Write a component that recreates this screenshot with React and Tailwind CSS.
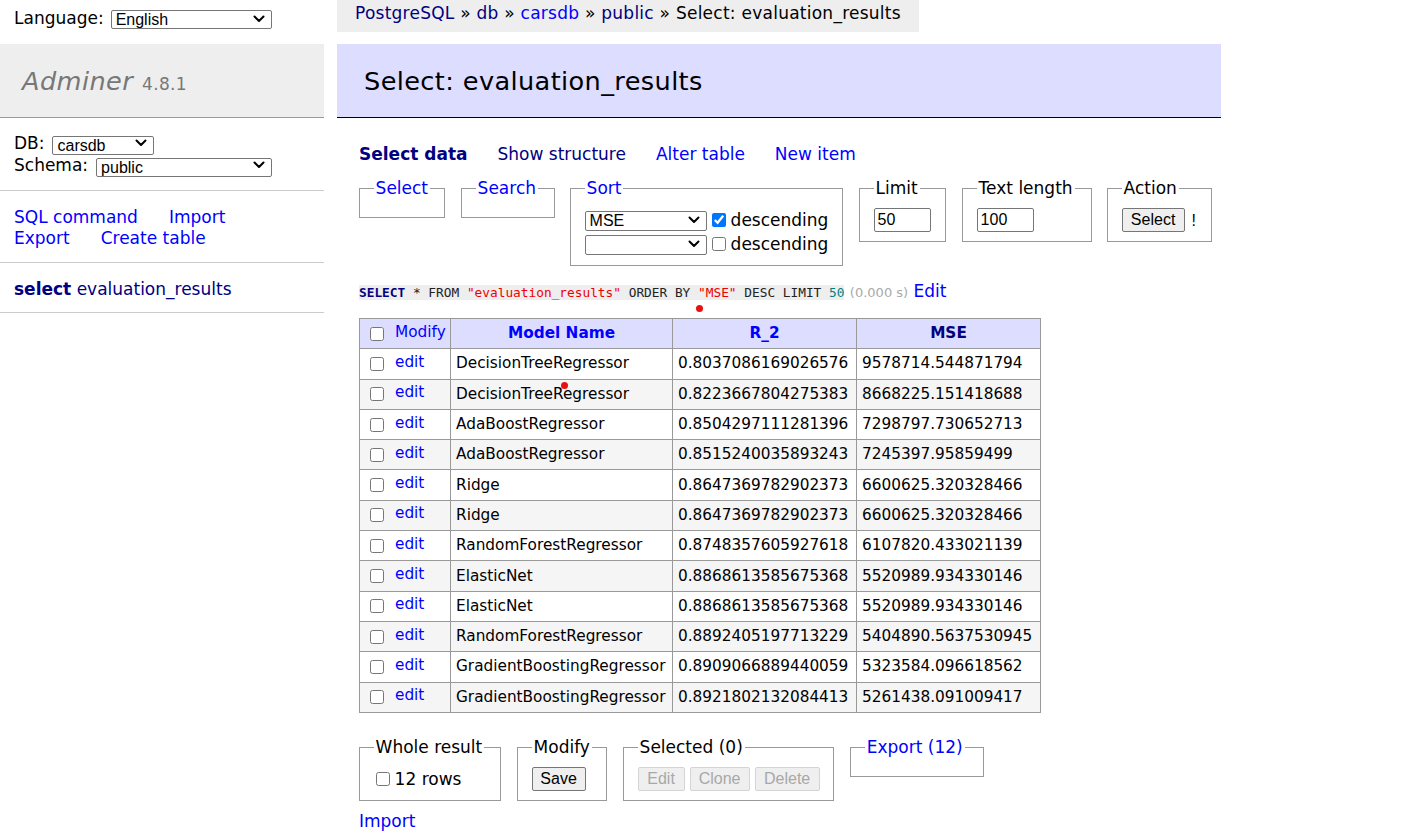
import React from "react";

const NAVY = "text-[#000080]";
const BLUE = "text-[#0000ff]";

function Chevron() {
  return (
    <svg width="12" height="8" viewBox="0 0 12 8" className="pointer-events-none absolute right-[7px] top-1/2 -translate-y-1/2">
      <path d="M1.5 1.5 L6 6 L10.5 1.5" stroke="#000" strokeWidth="2" fill="none" strokeLinecap="round" strokeLinejoin="round" />
    </svg>
  );
}

function Sel({ value, w, h = "h-[20px]" }) {
  return (
    <span className={`relative inline-block ${w} ${h} align-middle`}>
      <select
        defaultValue={value}
        className={`appearance-none w-full ${h} border border-[#767676] rounded-[2px] bg-white pl-[4px] pr-[20px] font-['Liberation_Sans',Arial,sans-serif] text-[16px] leading-[18px] text-black outline-none`}
      >
        <option value={value}>{value}</option>
      </select>
      <Chevron />
    </span>
  );
}

function Box({ checked }) {
  return (
    <input
      type="checkbox"
      defaultChecked={checked}
      className="w-[14px] h-[14px] m-0 align-middle accent-[#0075ff]"
    />
  );
}

function FS({ legend, legendClass = "text-black", w, children, className = "" }) {
  return (
    <fieldset className={`border border-[#999] ${w} px-[13.6px] pt-[9.5px] pb-[9px] ${className}`}>
      <legend className={`px-[2px] leading-[21px] ${legendClass}`}>{legend}</legend>
      {children}
    </fieldset>
  );
}

const rows = [
  ["DecisionTreeRegressor", "0.8037086169026576", "9578714.544871794"],
  ["DecisionTreeRegressor", "0.8223667804275383", "8668225.151418688"],
  ["AdaBoostRegressor", "0.8504297111281396", "7298797.730652713"],
  ["AdaBoostRegressor", "0.8515240035893243", "7245397.95859499"],
  ["Ridge", "0.8647369782902373", "6600625.320328466"],
  ["Ridge", "0.8647369782902373", "6600625.320328466"],
  ["RandomForestRegressor", "0.8748357605927618", "6107820.433021139"],
  ["ElasticNet", "0.8868613585675368", "5520989.934330146"],
  ["ElasticNet", "0.8868613585675368", "5520989.934330146"],
  ["RandomForestRegressor", "0.8892405197713229", "5404890.5637530945"],
  ["GradientBoostingRegressor", "0.8909066889440059", "5323584.096618562"],
  ["GradientBoostingRegressor", "0.8921802132084413", "5261438.091009417"],
];

function Btn({ children, disabled, w }) {
  return (
    <button
      disabled={disabled}
      className={`h-[24px] ${w} border rounded-[2px] font-['Liberation_Sans',Arial,sans-serif] text-[16px] leading-[20px] ${
        disabled ? "border-[#d4d4d4] bg-[#efefef] text-[#a8a8a8]" : "border-[#767676] bg-[#efefef] text-black"
      }`}
    >
      {children}
    </button>
  );
}

export default function App() {
  return (
    <div className="relative flex w-[1421px] min-h-[833px] bg-white text-black font-['DejaVu_Sans',Verdana,sans-serif] text-[17px] leading-[21px]">
      {/* Sidebar */}
      <div className="w-[324px] shrink-0">
        <div className="h-[44px] pb-[7px] pl-[14px] flex items-center gap-[7px]">
          <span>Language:</span>
          <Sel value="English" w="w-[161px]" h="h-[19px]" />
        </div>
        <div className="h-[74px] bg-[#eee] border-b border-[#999] pl-[22px] flex items-center">
          <div className="flex items-baseline gap-[9px] text-[#777]">
            <span className="italic text-[25.6px] leading-[32px] tracking-[0.4px]">Adminer</span>
            <span className="text-[17px] tracking-[0.3px]">4.8.1</span>
          </div>
        </div>
        <div className="px-[14px] py-[14px] border-b border-[#ccc] leading-[22px]">
          <div className="flex items-center gap-[8px] h-[22px]">
            <span>DB:</span>
            <Sel value="carsdb" w="w-[102px]" h="h-[19px]" />
          </div>
          <div className="flex items-center gap-[8px] h-[22px]">
            <span>Schema:</span>
            <Sel value="public" w="w-[176px]" h="h-[19px]" />
          </div>
        </div>
        <div className={`px-[14px] pt-[16px] pb-[13px] border-b border-[#ccc] ${BLUE}`}>
          <div className="flex gap-[31px]">
            <a>SQL command</a>
            <a>Import</a>
          </div>
          <div className="flex gap-[31px]">
            <a>Export</a>
            <a>Create table</a>
          </div>
        </div>
        <div className={`px-[14px] pt-[16px] pb-[12px] border-b border-[#ccc] ${NAVY}`}>
          <a className="font-bold">select</a> <a>evaluation_results</a>
        </div>
      </div>

      {/* Main */}
      <div className="ml-[13px] flex flex-col">
        <div className="self-start h-[32px] bg-[#eee] px-[18px] leading-[26px] whitespace-nowrap tracking-[0.25px]">
          <a className={NAVY}>PostgreSQL</a> » <a className={NAVY}>db</a> » <a className={BLUE}>carsdb</a> »{" "}
          <a className={NAVY}>public</a> » Select: evaluation_results
        </div>
        <div className="mt-[12px] w-[884px] h-[74px] bg-[#ddf] border-b border-black pl-[27px] flex items-center">
          <h2 className="text-[25.6px] leading-[32px] font-normal tracking-[0.38px]">Select: evaluation_results</h2>
        </div>

        <div className="pl-[22px]">
          <div className="mt-[25.5px] flex gap-[30px]">
            <a className={`font-bold ${NAVY}`}>Select data</a>
            <a className={NAVY}>Show structure</a>
            <a className={BLUE}>Alter table</a>
            <a className={BLUE}>New item</a>
          </div>

          <div className="mt-[13px] flex items-start gap-[16px]">
            <FS legend="Select" legendClass={BLUE} w="w-[86px]" />
            <FS legend="Search" legendClass={BLUE} w="w-[94px]" />
            <FS legend="Sort" legendClass={BLUE} w="w-[273px]" className="-ml-[1px]">
              <div className="flex items-center h-[24px] gap-[5px]">
                <Sel value="MSE" w="w-[122px]" />
                <Box checked />
                <span>descending</span>
              </div>
              <div className="flex items-center h-[24px] gap-[5px]">
                <Sel value="" w="w-[122px]" />
                <Box />
                <span>descending</span>
              </div>
            </FS>
            <FS legend="Limit" w="w-[87px]">
              <input
                defaultValue="50"
                className="block w-[57px] h-[24px] border border-[#767676] rounded-[2px] px-[3px] font-['Liberation_Sans',Arial,sans-serif] text-[16px]"
              />
            </FS>
            <FS legend="Text length" w="w-[130px]">
              <input
                defaultValue="100"
                className="block w-[57px] h-[24px] border border-[#767676] rounded-[2px] px-[3px] font-['Liberation_Sans',Arial,sans-serif] text-[16px]"
              />
            </FS>
            <FS legend="Action" w="w-[105px]" className="-ml-[1px]">
              <div className="flex items-center gap-[7px]">
                <Btn w="w-[63px]">Select</Btn>
                <span className="font-['Liberation_Sans',Arial,sans-serif] text-[16px]">!</span>
              </div>
            </FS>
          </div>

          <div className="mt-[14.5px] whitespace-nowrap">
            <code className="bg-[#eee] font-['DejaVu_Sans_Mono',monospace] text-[12.8px] text-[#222]">
              <span className="text-[#000080] font-bold">SELECT</span> * FROM{" "}
              <span className="text-[#ee0000]">"evaluation_results"</span> ORDER BY{" "}
              <span className="text-[#ee0000]">"MSE"</span> DESC LIMIT <span className="text-[#008080]">50</span>
            </code>{" "}
            <span className="text-[13px] text-[#aaa]">(0.000 s)</span> <a className={BLUE}>Edit</a>
          </div>

          <table className="mt-[15.5px] border-collapse text-[15.3px] leading-[19px] table-fixed w-[682px]">
            <colgroup>
              <col className="w-[91px]" />
              <col className="w-[222px]" />
              <col className="w-[184px]" />
              <col className="w-[184px]" />
            </colgroup>
            <thead>
              <tr className="h-[30.3px] bg-[#ddf]">
                <td className="border border-[#999] pl-[10px] pr-0 whitespace-nowrap">
                  <div className="flex items-center gap-[11px]">
                    <Box />
                    <a className={`${BLUE} -mt-[3px]`}>Modify</a>
                  </div>
                </td>
                <th className={`border border-[#999] text-center font-bold ${BLUE}`}>Model Name</th>
                <th className={`border border-[#999] text-center font-bold ${BLUE}`}>R_2</th>
                <th className={`border border-[#999] text-center font-bold ${NAVY}`}>MSE</th>
              </tr>
            </thead>
            <tbody>
              {rows.map((r, i) => (
                <tr key={i} className={`h-[30.3px] ${i % 2 === 1 ? "bg-[#f5f5f5]" : "bg-white"}`}>
                  <td className="border border-[#999] pl-[10px] pr-0">
                    <div className="flex items-center gap-[11px]">
                      <Box />
                      <a className={`${BLUE} -mt-[3px]`}>edit</a>
                    </div>
                  </td>
                  <td className="border border-[#999] px-[5px] whitespace-nowrap">{r[0]}</td>
                  <td className="border border-[#999] px-[5px] whitespace-nowrap">{r[1]}</td>
                  <td className="border border-[#999] px-[5px] whitespace-nowrap">{r[2]}</td>
                </tr>
              ))}
            </tbody>
          </table>

          <div className="mt-[24px] flex items-start gap-[16px]">
            <FS legend="Whole result" w="w-[142px]">
              <div className="flex items-center h-[24px] gap-[5px] pl-[2px]">
                <Box />
                <span>12 rows</span>
              </div>
            </FS>
            <FS legend="Modify" w="w-[90px]">
              <Btn w="w-[54px]">Save</Btn>
            </FS>
            <FS legend="Selected (0)" w="w-[211px]">
              <div className="flex gap-[5px]">
                <Btn disabled w="w-[47px]">Edit</Btn>
                <Btn disabled w="w-[60px]">Clone</Btn>
                <Btn disabled w="w-[65px]">Delete</Btn>
              </div>
            </FS>
            <fieldset className="border border-[#999] w-[134px] h-[40px] px-[13.6px]">
              <legend className={`px-[2px] leading-[21px] ${BLUE}`}>Export (12)</legend>
            </fieldset>
          </div>

          <div className="mt-[10px] pb-[10px]">
            <a className={BLUE}>Import</a>
          </div>
        </div>
      </div>

      {/* red cursor dots */}
      <span className="absolute left-[696px] top-[305px] w-[7px] h-[7px] rounded-full bg-[#e81010]" />
      <span className="absolute left-[561px] top-[382px] w-[7px] h-[7px] rounded-full bg-[#e81010]" />
    </div>
  );
}
